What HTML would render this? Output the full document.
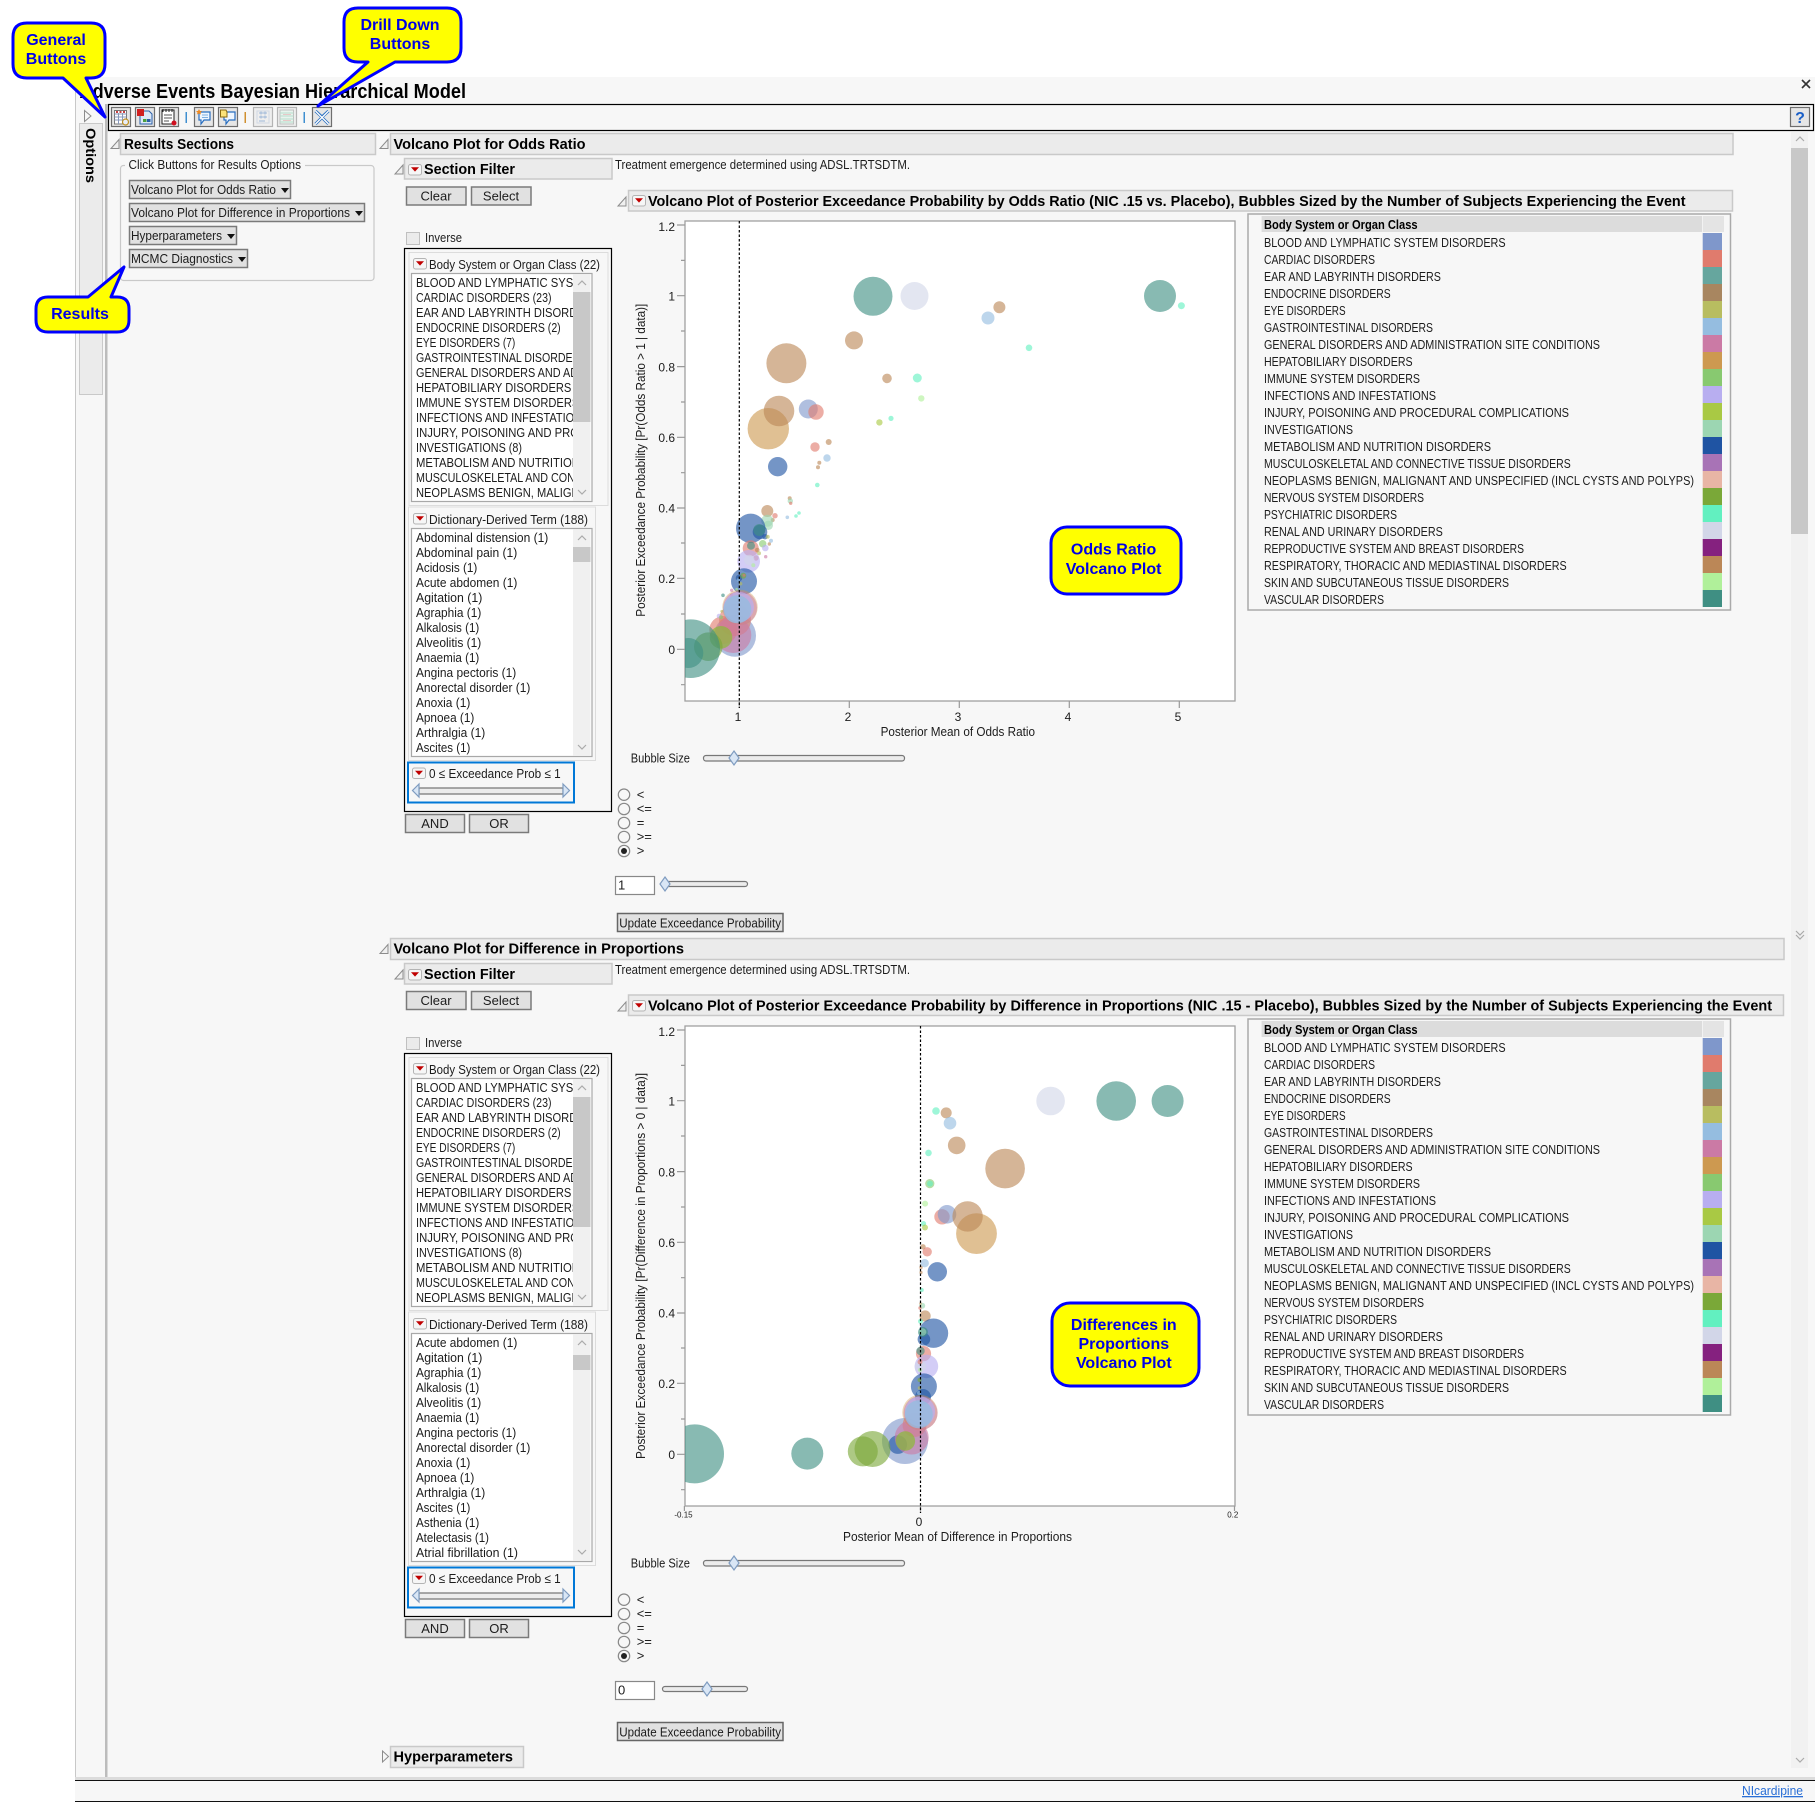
<!DOCTYPE html>
<html><head><meta charset="utf-8"><title>Adverse Events Bayesian Hierarchical Model</title>
<style>
html,body{margin:0;padding:0;background:#fff}
svg{display:block}
text{font-family:"Liberation Sans",sans-serif;font-size:13px;fill:#1c1c1c}
.b{font-weight:bold;font-size:15px;fill:#000}
.s{font-size:12px}
.h{fill:#ebebeb;stroke:#c9c9c9;stroke-width:1.5}
.btn{fill:#e1e1e1;stroke:#7a7a7a;stroke-width:1.5}
.cl{fill:#ff0;stroke:#00f;stroke-width:3;stroke-linejoin:round}
.ct{font-weight:bold;font-size:16px;fill:#0000e6;text-anchor:middle}
.tk{stroke:#999;stroke-width:1.2}
.c{text-anchor:middle}
.e{text-anchor:end}
.bub circle{fill-opacity:.62}
.bl{fill:#7f97cb}.ca{fill:#e07b6d}.ea{fill:#3f8f83}.en{fill:#a88660}.ey{fill:#b8bd60}.ga{fill:#95bde0}.ge{fill:#cb7aa5}.hp{fill:#cd9950}.im{fill:#88c970}.inf{fill:#b8aef0}.ij{fill:#a9c944}.iv{fill:#9cd6b2}.me{fill:#1f54a3}.mu{fill:#a873b6}.ne{fill:#7aa838}.ps{fill:#62f0c0}.re{fill:#d2d6e8}.rs{fill:#bb8757}.sk{fill:#b0f09a}
</style></head>
<body>
<svg xmlns="http://www.w3.org/2000/svg" width="1815" height="1820" viewBox="0 0 1815 1820">
<defs>
<g id="tri"><path d="M0 9L8 9L8 0Z" fill="#f0f0f0" stroke="#8c8c8c"/></g>
<g id="red"><rect x=".5" y=".5" width="13" height="10.5" rx="2" fill="#f6f6f6" stroke="#b4b4b4"/><path d="M3 3.2L11 3.2L7 7.6Z" fill="#c00000"/></g>
<g id="up"><path d="M-4 2L0 -2L4 2" fill="none" stroke="#aaa" stroke-width="1.2"/></g>
<g id="dn"><path d="M-4 -2L0 2L4 -2" fill="none" stroke="#aaa" stroke-width="1.2"/></g>
<g id="dia"><path d="M0 -7L5 0L0 7L-5 0Z" fill="#d9e6f5" stroke="#7f9cc0" stroke-width="1.2"/></g>
<g id="rad"><circle r="5.7" fill="#f7f7f7" stroke="#888" stroke-width="1.2"/></g>
<clipPath id="cl1"><rect x="412" y="274" width="161" height="227"/></clipPath>
<clipPath id="cp"><rect x="685" y="221" width="550" height="480"/></clipPath>
<clipPath id="cp2"><rect x="685" y="1026" width="550" height="480"/></clipPath>
</defs>

<rect x="75" y="77" width="1740" height="1724" fill="#f7f7f7"/>
<rect x="75" y="1777" width="1740" height="3" fill="#dcdcdc"/>
<rect x="75" y="1780" width="1740" height="1" fill="#111"/>
<rect x="75" y="1801" width="1740" height="1" fill="#111"/>
<rect x="75" y="77" width="1" height="1700" fill="#c8c8c8"/>
<rect x="105" y="104" width="2.5" height="1673" fill="#bcbcbc"/>
<rect x="79.500" y="123.500" width="23" height="271" fill="#ebebeb" stroke="#c9c9c9"/>
<path d="M84.500 110.500L91 116L84.500 121.500Z" fill="#f7f7f7" stroke="#8c8c8c"/>
<text transform="translate(86,128) rotate(90)" class="b" style="font-size:14px" textLength="55" lengthAdjust="spacingAndGlyphs">Options</text>

<text x="79.500" y="98" class="b" style="font-size:20px" textLength="386.500" lengthAdjust="spacingAndGlyphs">Adverse Events Bayesian Hierarchical Model</text>
<path d="M1802 80L1810 88M1810 80L1802 88" stroke="#333" stroke-width="1.6"/>

<!-- toolbar -->
<rect x="108.500" y="104.500" width="1705" height="26" fill="#f7f7f7" stroke="#000" stroke-width="1.2"/>
<g fill="#e6e6e6" stroke="#6e6e6e" stroke-width="1.2">
<rect x="111.500" y="107.500" width="19" height="19"/><rect x="135.500" y="107.500" width="19" height="19"/><rect x="159.500" y="107.500" width="19" height="19"/><rect x="194.500" y="107.500" width="19" height="19"/><rect x="218.500" y="107.500" width="19" height="19"/>
<rect x="312.500" y="107.500" width="19" height="19"/>
</g>
<g fill="#eee" stroke="#b4b4b4" stroke-width="1.2"><rect x="253.500" y="107.500" width="19" height="19"/><rect x="277.500" y="107.500" width="19" height="19"/></g>
<rect x="185.500" y="112" width="1.500" height="11" fill="#3f8fd0"/><rect x="244.500" y="112" width="1.500" height="11" fill="#d09030"/><rect x="303.500" y="112" width="1.500" height="11" fill="#3f8fd0"/>
<!-- icon 1 -->
<rect x="114.500" y="110.500" width="12" height="13.500" fill="#fff" stroke="#777"/><path d="M116 112H118M119.500 112H121.500M123 112H125" stroke="#c94040" stroke-width="2"/><path d="M114.500 114H126.500M114.500 117H126.500M114.500 120H126.500M118.500 113V124M122.500 113V124" stroke="#8899bb" fill="none"/><circle cx="125.500" cy="122" r="3" fill="#e8eef8" stroke="#c09020" stroke-width="1.200"/>
<!-- icon 2 -->
<path d="M140 111H149L152 114V124H140Z" fill="#dce8f8" stroke="#2a5fa8"/><rect x="137" y="109" width="7" height="7" fill="#d02020"/><rect x="143" y="119" width="3.500" height="3" fill="#4aa040"/><rect x="147" y="119" width="3.500" height="3" fill="#2a5fa8"/>
<!-- icon 3 -->
<rect x="162" y="110" width="12" height="14" fill="#fff" stroke="#222"/><path d="M163 109V112M166 109V112M169 109V112M172 109V112" stroke="#222"/><path d="M164 115H172M164 118H172M164 121H169" stroke="#555"/><circle cx="174" cy="123" r="2.500" fill="#d01020"/>
<!-- icon 4 -->
<path d="M199 112H210V120H204L201 124V120H199Z" fill="#eef6ff" stroke="#2a6fc0" stroke-width="1.200"/><path d="M202 115H208M202 117.500H208" stroke="#7fb0e0"/><path d="M199 109L200 111L202 111L200.500 112.500L201 114.500L199 113.500L197 114.500L197.500 112.500L196 111L198 111Z" fill="#f08a20"/>
<!-- icon 5 -->
<path d="M224 112H235V120H229L226 124V120H224Z" fill="#eef6ff" stroke="#2a6fc0" stroke-width="1.200"/><path d="M220.500 110H226L227 112V117H220.500Z" fill="#fbe37a" stroke="#8a6a10"/>
<!-- icon 6 -->
<g stroke="#9fb8d8" fill="none"><path d="M257 111H269V123H257Z" stroke="#d0d8e4"/><path d="M259 113H267M259 117H267M259 121H265M261 111.500V114.500M265 111.500V114.500M261 115.500V118.500M265 115.500V118.500"/></g>
<!-- icon 7 -->
<rect x="280" y="110" width="13.500" height="14" fill="#e8f4ee" stroke="#c0c0c0"/><path d="M280 113H293.500M280 116H293.500M280 119H293.500M280 122H293.500" stroke="#b8dccc"/><path d="M283 114.500H291M283 120.500H291" stroke="#e8c8c8"/>
<!-- icon 8 -->
<path d="M315.500 111L322 117L328.500 111M315.500 124L322 117.500L328.500 124" fill="none" stroke="#2a6fc0" stroke-width="3"/><path d="M315.500 111L328.500 124M328.500 111L315.500 124" stroke="#fff" stroke-width="1.300"/>
<!-- help -->
<rect x="1790.500" y="107.500" width="19" height="19" fill="#e6e6e6" stroke="#6e6e6e" stroke-width="1.200"/>
<text x="1800" y="123" class="c" style="font-size:16px;font-weight:bold;fill:#1a5fc8">?</text>

<!-- main scrollbar -->
<rect x="1791" y="132" width="17" height="1636" fill="#f1f1f1"/>
<rect x="1791" y="148" width="17" height="386" fill="#c8c8c8"/>
<use href="#up" x="1800" y="139"/><use href="#dn" x="1800" y="1760"/>
<use href="#dn" x="1800" y="933"/><use href="#dn" x="1800" y="937"/>

<!-- Results sections -->
<use href="#tri" x="111" y="139.500"/>
<rect x="120.500" y="133.500" width="255" height="21" class="h"/>
<text x="124" y="149" class="b" textLength="110" lengthAdjust="spacingAndGlyphs">Results Sections</text>
<rect x="120.500" y="165.500" width="253.500" height="115" rx="3" fill="none" stroke="#c9c9c9" stroke-width="1.2"/>
<rect x="125" y="160" width="180" height="12" fill="#f7f7f7"/>
<text x="128.500" y="169" textLength="172.500" lengthAdjust="spacingAndGlyphs">Click Buttons for Results Options</text>
<rect x="129.500" y="180.500" width="161" height="18" class="btn"/>
<text x="131" y="194" textLength="145" lengthAdjust="spacingAndGlyphs">Volcano Plot for Odds Ratio</text><path d="M281 188H289L285 193Z" fill="#111"/>
<rect x="129.500" y="203.500" width="235" height="18" class="btn"/>
<text x="131" y="217" textLength="219" lengthAdjust="spacingAndGlyphs">Volcano Plot for Difference in Proportions</text><path d="M355 211H363L359 216Z" fill="#111"/>
<rect x="129.500" y="226.500" width="107" height="18" class="btn"/>
<text x="131" y="240" textLength="91" lengthAdjust="spacingAndGlyphs">Hyperparameters</text><path d="M227 234H235L231 239Z" fill="#111"/>
<rect x="129.500" y="249.500" width="118" height="18" class="btn"/>
<text x="131" y="263" textLength="102" lengthAdjust="spacingAndGlyphs">MCMC Diagnostics</text><path d="M238 257H246L242 262Z" fill="#111"/>

<!-- ========== SECTION 1 ========== -->
<g>
<use href="#tri" x="380" y="139.500"/>
<rect x="390.500" y="133.500" width="1342.500" height="21" class="h"/>
<text x="393.500" y="149" class="b" textLength="192" lengthAdjust="spacingAndGlyphs">Volcano Plot for Odds Ratio</text>
<use href="#tri" x="395" y="165"/>
<rect x="404.500" y="158.500" width="207.500" height="20.500" class="h"/>
<use href="#red" x="408" y="164"/>
<text x="424" y="174" class="b" textLength="91" lengthAdjust="spacingAndGlyphs">Section Filter</text>
<text x="615" y="169" textLength="295" lengthAdjust="spacingAndGlyphs">Treatment emergence determined using ADSL.TRTSDTM.</text>
<rect x="406.500" y="187" width="59.500" height="18" class="btn"/><text x="436" y="200.500" class="c">Clear</text>
<rect x="471.500" y="187" width="59.500" height="18" class="btn"/><text x="501" y="200.500" class="c">Select</text>
<rect x="406.500" y="232.500" width="13" height="12" fill="#ebebeb" stroke="#c0c0c0"/>
<text x="425" y="242" textLength="37" lengthAdjust="spacingAndGlyphs">Inverse</text>
<rect x="404.500" y="248.500" width="207" height="563" fill="#f7f7f7" stroke="#000" stroke-width="1.200"/>
<rect x="409" y="252.500" width="199" height="253" fill="none" stroke="#dcdcdc"/>
<use href="#red" x="413" y="258"/>
<text x="429" y="269" textLength="171" lengthAdjust="spacingAndGlyphs">Body System or Organ Class (22)</text>
<rect x="411.500" y="273.500" width="180.500" height="228" fill="#fff" stroke="#a8a8a8" stroke-width="1.200"/>
<rect x="573" y="274.500" width="17.500" height="226" fill="#f0f0f0"/><rect x="573" y="292" width="17.500" height="130" fill="#c8c8c8"/>
<use href="#up" x="582" y="283"/><use href="#dn" x="582" y="492"/>
<g clip-path="url(#cl1)">
<text x="416" y="287" textLength="268" lengthAdjust="spacingAndGlyphs">BLOOD AND LYMPHATIC SYSTEM DISORDERS (4)</text>
<text x="416" y="302" textLength="135.500" lengthAdjust="spacingAndGlyphs">CARDIAC DISORDERS (23)</text>
<text x="416" y="317" textLength="201" lengthAdjust="spacingAndGlyphs">EAR AND LABYRINTH DISORDERS (5)</text>
<text x="416" y="332" textLength="144.700" lengthAdjust="spacingAndGlyphs">ENDOCRINE DISORDERS (2)</text>
<text x="416" y="347" textLength="99.300" lengthAdjust="spacingAndGlyphs">EYE DISORDERS (7)</text>
<text x="416" y="362" textLength="193" lengthAdjust="spacingAndGlyphs">GASTROINTESTINAL DISORDERS (20)</text>
<text x="416" y="377" textLength="360" lengthAdjust="spacingAndGlyphs">GENERAL DISORDERS AND ADMINISTRATION SITE CONDITIONS (15)</text>
<text x="416" y="392" textLength="172" lengthAdjust="spacingAndGlyphs">HEPATOBILIARY DISORDERS (3)</text>
<text x="416" y="407" textLength="180" lengthAdjust="spacingAndGlyphs">IMMUNE SYSTEM DISORDERS (2)</text>
<text x="416" y="422" textLength="196" lengthAdjust="spacingAndGlyphs">INFECTIONS AND INFESTATIONS (20)</text>
<text x="416" y="437" textLength="329" lengthAdjust="spacingAndGlyphs">INJURY, POISONING AND PROCEDURAL COMPLICATIONS (9)</text>
<text x="416" y="452" textLength="106" lengthAdjust="spacingAndGlyphs">INVESTIGATIONS (8)</text>
<text x="416" y="467" textLength="251" lengthAdjust="spacingAndGlyphs">METABOLISM AND NUTRITION DISORDERS (9)</text>
<text x="416" y="482" textLength="330" lengthAdjust="spacingAndGlyphs">MUSCULOSKELETAL AND CONNECTIVE TISSUE DISORDERS (8)</text>
<text x="416" y="497" textLength="454" lengthAdjust="spacingAndGlyphs">NEOPLASMS BENIGN, MALIGNANT AND UNSPECIFIED (INCL CYSTS AND POLYPS) (4)</text>
</g>
<rect x="408.500" y="507" width="187" height="253.500" fill="none" stroke="#dcdcdc"/>
<use href="#red" x="413" y="513"/>
<text x="429" y="524" textLength="159" lengthAdjust="spacingAndGlyphs">Dictionary-Derived Term (188)</text>
<rect x="411.500" y="528.500" width="180.500" height="228" fill="#fff" stroke="#a8a8a8" stroke-width="1.200"/>
<rect x="573" y="529.500" width="17.500" height="226" fill="#f0f0f0"/><rect x="573" y="547" width="17.500" height="15" fill="#c8c8c8"/>
<use href="#up" x="582" y="538"/><use href="#dn" x="582" y="747"/>
<text x="416" y="542" textLength="132.300" lengthAdjust="spacingAndGlyphs">Abdominal distension (1)</text>
<text x="416" y="557" textLength="101.300" lengthAdjust="spacingAndGlyphs">Abdominal pain (1)</text>
<text x="416" y="572" textLength="61.300" lengthAdjust="spacingAndGlyphs">Acidosis (1)</text>
<text x="416" y="587" textLength="101.300" lengthAdjust="spacingAndGlyphs">Acute abdomen (1)</text>
<text x="416" y="602" textLength="66.300" lengthAdjust="spacingAndGlyphs">Agitation (1)</text>
<text x="416" y="617" textLength="65.300" lengthAdjust="spacingAndGlyphs">Agraphia (1)</text>
<text x="416" y="632" textLength="63.300" lengthAdjust="spacingAndGlyphs">Alkalosis (1)</text>
<text x="416" y="647" textLength="65.300" lengthAdjust="spacingAndGlyphs">Alveolitis (1)</text>
<text x="416" y="662" textLength="63.300" lengthAdjust="spacingAndGlyphs">Anaemia (1)</text>
<text x="416" y="677" textLength="100.300" lengthAdjust="spacingAndGlyphs">Angina pectoris (1)</text>
<text x="416" y="692" textLength="114.300" lengthAdjust="spacingAndGlyphs">Anorectal disorder (1)</text>
<text x="416" y="707" textLength="54.300" lengthAdjust="spacingAndGlyphs">Anoxia (1)</text>
<text x="416" y="722" textLength="58.300" lengthAdjust="spacingAndGlyphs">Apnoea (1)</text>
<text x="416" y="737" textLength="69.300" lengthAdjust="spacingAndGlyphs">Arthralgia (1)</text>
<text x="416" y="752" textLength="54.300" lengthAdjust="spacingAndGlyphs">Ascites (1)</text>
<rect x="408" y="762.500" width="166" height="40" fill="#f7f7f7" stroke="#0078d7" stroke-width="2"/>
<use href="#red" x="412" y="767.500"/>
<text x="429" y="778" textLength="131.700" lengthAdjust="spacingAndGlyphs">0 ≤ Exceedance Prob ≤ 1</text>
<rect x="419" y="788" width="144" height="6" rx="1" fill="#ececec" stroke="#777" stroke-width="1.200"/>
<path d="M419 784L412.500 790.500L419 797Z" fill="#d9e6f5" stroke="#7f9cc0" stroke-width="1.200"/><path d="M563 784L569.500 790.500L563 797Z" fill="#d9e6f5" stroke="#7f9cc0" stroke-width="1.200"/>
<rect x="405.500" y="814.500" width="59" height="18" class="btn"/><text x="435" y="828" class="c">AND</text>
<rect x="469.500" y="814.500" width="59" height="18" class="btn"/><text x="499" y="828" class="c">OR</text>

<use href="#tri" x="618" y="197"/>
<rect x="628.500" y="190.500" width="1104" height="20.500" class="h"/>
<use href="#red" x="632" y="195"/>
<text x="648" y="206" class="b" textLength="1037.500" lengthAdjust="spacingAndGlyphs">Volcano Plot of Posterior Exceedance Probability by Odds Ratio (NIC .15 vs. Placebo), Bubbles Sized by the Number of Subjects Experiencing the Event</text>

<rect x="685" y="221" width="550" height="480" fill="#fff" stroke="#a0a0a0" stroke-width="1.300"/>
<g class="bub" clip-path="url(#cp)">
<circle cx="873" cy="296.300" r="19.500" class="ea"/><circle cx="914.500" cy="296" r="14" class="re"/><circle cx="1160" cy="296" r="16" class="ea"/><circle cx="1181.400" cy="305.700" r="3.500" class="ps"/><circle cx="999.400" cy="307.300" r="6" class="rs"/><circle cx="988" cy="318" r="6.500" class="ga"/><circle cx="1029" cy="347.800" r="3.300" class="ps"/><circle cx="854" cy="340.400" r="9" class="rs"/><circle cx="786.400" cy="363.300" r="20" class="rs"/><circle cx="887" cy="378.400" r="4.800" class="rs"/><circle cx="917.300" cy="378" r="4.500" class="ps"/><circle cx="921.300" cy="398.400" r="3.200" class="sk"/><circle cx="879.400" cy="422.400" r="3.200" class="ij"/><circle cx="891" cy="418.400" r="2.600" class="ps"/>
<circle cx="768.300" cy="428.700" r="20.700" class="hp"/><circle cx="779" cy="411" r="15.300" class="rs"/><circle cx="808.300" cy="409" r="9.500" class="bl"/><circle cx="816" cy="412" r="7.700" class="ca"/><circle cx="815" cy="447" r="4.700" class="ca"/><circle cx="828.700" cy="442" r="3" class="rs"/><circle cx="827" cy="458" r="3.700" class="ga"/><circle cx="819.300" cy="462.700" r="2" class="rs"/><circle cx="818" cy="467.300" r="2" class="rs"/><circle cx="777.700" cy="466.700" r="9.700" class="me"/><circle cx="817.300" cy="485" r="2.300" class="ps"/>
<circle cx="789.700" cy="498.300" r="2" class="rs"/><circle cx="790.300" cy="501" r="2.700" class="iv"/><circle cx="790.700" cy="503.300" r="1.700" class="ca"/><circle cx="787.300" cy="517.300" r="1.800" class="ga"/><circle cx="796" cy="516" r="1.800" class="ps"/><circle cx="799" cy="513" r="1.800" class="ps"/>
<circle cx="767.300" cy="511" r="6" class="rs"/><circle cx="775" cy="515.700" r="2.700" class="ca"/><circle cx="772.700" cy="520" r="2" class="rs"/><circle cx="767.300" cy="520.700" r="6" class="iv"/><circle cx="768.300" cy="525.300" r="4.700" class="iv"/>
<circle cx="750.700" cy="528.300" r="14.700" class="me"/><circle cx="760" cy="532" r="7.300" class="me"/><circle cx="759.300" cy="530" r="6" class="ea"/><circle cx="765" cy="536.700" r="2.700" class="me"/><circle cx="767.700" cy="536.700" r="2" class="ey"/><circle cx="771" cy="540.700" r="2" class="ga"/><circle cx="762.700" cy="543.700" r="3.700" class="im"/><circle cx="769.300" cy="544" r="1.700" class="rs"/>
<circle cx="750.700" cy="548.300" r="8" class="ca"/><circle cx="751" cy="545.700" r="4" class="ea"/><circle cx="765.300" cy="548" r="3.300" class="inf"/><circle cx="757.300" cy="550" r="2.300" class="rs"/><circle cx="759" cy="553.300" r="2" class="ey"/><circle cx="765.700" cy="556.700" r="1.700" class="ge"/><circle cx="756" cy="558" r="2.700" class="ca"/>
<circle cx="748.700" cy="561.300" r="11.300" class="inf"/><circle cx="749.300" cy="560" r="5.300" class="re"/><circle cx="753.300" cy="565.300" r="2" class="sk"/>
<circle cx="744" cy="581.300" r="13" class="me"/><circle cx="739" cy="578" r="3.300" class="me"/><circle cx="743.300" cy="575.700" r="3" class="ne"/><circle cx="744" cy="575.300" r="1.400" class="ca"/><circle cx="740.700" cy="583.700" r="1.700" class="ey"/><circle cx="738.300" cy="580" r="1.700" class="ga"/><circle cx="731.700" cy="590.300" r="1.700" class="ge"/><circle cx="723" cy="595.300" r="1.800" class="ea"/><circle cx="731.700" cy="595.300" r="1.700" class="ca"/><circle cx="736.700" cy="589.300" r="1.400" class="sk"/>
<circle cx="735" cy="635.700" r="21" class="bl"/><circle cx="723.300" cy="630" r="14" class="ca"/><circle cx="735" cy="620" r="16" class="ca"/><circle cx="733.300" cy="635" r="18" class="ge"/>
<circle cx="721" cy="637.300" r="11.300" fill="#8db83a" style="fill-opacity:.72"/><circle cx="708.300" cy="646.700" r="14.300" class="ne"/><circle cx="690.700" cy="648.700" r="29.300" class="ea"/><circle cx="688.300" cy="653" r="15" class="ea"/>
<circle cx="740" cy="607.300" r="17.700" class="hp" style="fill-opacity:.4"/><circle cx="740" cy="608" r="17" class="ge" style="fill-opacity:.5"/><circle cx="739" cy="607" r="15" class="inf" style="fill-opacity:.7"/><circle cx="737.300" cy="609.300" r="14" class="ga" style="fill-opacity:.8"/>
<circle cx="719" cy="616" r="2.300" class="inf"/><circle cx="721" cy="617.300" r="2" class="im"/><circle cx="721.700" cy="611.300" r="1.400" class="ey"/>
</g>
<g class="tk"><path d="M677 225H685M677 295.700H685M677 366.600H685M677 437.300H685M677 508H685M677 578.300H685M677 649.300H685M681 260.400H685M681 331H685M681 402H685M681 472.700H685M681 543H685M681 614H685M681 684.700H685M739.300 701V708M849.300 701V708M959.300 701V708M1069.300 701V708M1179.300 701V708"/></g>
<path d="M739.300 221V708" stroke="#000" stroke-width="1.200" stroke-dasharray="2.500 2" fill="none"/>
<text x="675" y="231" class="e s">1.2</text><text x="675" y="300.500" class="e s">1</text><text x="675" y="371.500" class="e s">0.8</text><text x="675" y="442" class="e s">0.6</text><text x="675" y="512.500" class="e s">0.4</text><text x="675" y="583" class="e s">0.2</text><text x="675" y="654" class="e s">0</text>
<text x="738" y="721" class="c s">1</text><text x="848" y="721" class="c s">2</text><text x="958" y="721" class="c s">3</text><text x="1068" y="721" class="c s">4</text><text x="1178" y="721" class="c s">5</text>
<text x="880.600" y="736" textLength="154.400" lengthAdjust="spacingAndGlyphs">Posterior Mean of Odds Ratio</text>
<text transform="translate(645,616.700) rotate(-90)" textLength="313" lengthAdjust="spacingAndGlyphs">Posterior Exceedance Probability [Pr(Odds Ratio &gt; 1 | data)]</text>

<rect x="1248" y="214" width="482.500" height="396" fill="#f7f7f7" stroke="#aaa" stroke-width="1.500"/>
<rect x="1261.600" y="216" width="440.400" height="16" fill="#dcdcdc"/><rect x="1702.700" y="216" width="21.300" height="16" fill="#e4e4e4"/>
<text x="1264" y="229" class="b" style="font-size:13px" textLength="153.600" lengthAdjust="spacingAndGlyphs">Body System or Organ Class</text>
<text x="1264" y="247" textLength="241.600" lengthAdjust="spacingAndGlyphs">BLOOD AND LYMPHATIC SYSTEM DISORDERS</text>
<text x="1264" y="264" textLength="111" lengthAdjust="spacingAndGlyphs">CARDIAC DISORDERS</text>
<text x="1264" y="281" textLength="176.900" lengthAdjust="spacingAndGlyphs">EAR AND LABYRINTH DISORDERS</text>
<text x="1264" y="298" textLength="126.700" lengthAdjust="spacingAndGlyphs">ENDOCRINE DISORDERS</text>
<text x="1264" y="315" textLength="81.600" lengthAdjust="spacingAndGlyphs">EYE DISORDERS</text>
<text x="1264" y="332" textLength="169" lengthAdjust="spacingAndGlyphs">GASTROINTESTINAL DISORDERS</text>
<text x="1264" y="349" textLength="336" lengthAdjust="spacingAndGlyphs">GENERAL DISORDERS AND ADMINISTRATION SITE CONDITIONS</text>
<text x="1264" y="366" textLength="148.600" lengthAdjust="spacingAndGlyphs">HEPATOBILIARY DISORDERS</text>
<text x="1264" y="383" textLength="156" lengthAdjust="spacingAndGlyphs">IMMUNE SYSTEM DISORDERS</text>
<text x="1264" y="400" textLength="172" lengthAdjust="spacingAndGlyphs">INFECTIONS AND INFESTATIONS</text>
<text x="1264" y="417" textLength="305" lengthAdjust="spacingAndGlyphs">INJURY, POISONING AND PROCEDURAL COMPLICATIONS</text>
<text x="1264" y="434" textLength="89" lengthAdjust="spacingAndGlyphs">INVESTIGATIONS</text>
<text x="1264" y="451" textLength="227" lengthAdjust="spacingAndGlyphs">METABOLISM AND NUTRITION DISORDERS</text>
<text x="1264" y="468" textLength="306.700" lengthAdjust="spacingAndGlyphs">MUSCULOSKELETAL AND CONNECTIVE TISSUE DISORDERS</text>
<text x="1264" y="485" textLength="430" lengthAdjust="spacingAndGlyphs">NEOPLASMS BENIGN, MALIGNANT AND UNSPECIFIED (INCL CYSTS AND POLYPS)</text>
<text x="1264" y="502" textLength="160" lengthAdjust="spacingAndGlyphs">NERVOUS SYSTEM DISORDERS</text>
<text x="1264" y="519" textLength="133" lengthAdjust="spacingAndGlyphs">PSYCHIATRIC DISORDERS</text>
<text x="1264" y="536" textLength="178.800" lengthAdjust="spacingAndGlyphs">RENAL AND URINARY DISORDERS</text>
<text x="1264" y="553" textLength="260" lengthAdjust="spacingAndGlyphs">REPRODUCTIVE SYSTEM AND BREAST DISORDERS</text>
<text x="1264" y="570" textLength="302.700" lengthAdjust="spacingAndGlyphs">RESPIRATORY, THORACIC AND MEDIASTINAL DISORDERS</text>
<text x="1264" y="587" textLength="245" lengthAdjust="spacingAndGlyphs">SKIN AND SUBCUTANEOUS TISSUE DISORDERS</text>
<text x="1264" y="604" textLength="120" lengthAdjust="spacingAndGlyphs">VASCULAR DISORDERS</text>
<g id="sw">
<rect x="1702.700" y="233" width="19.300" height="17" fill="#7f97cb"/><rect x="1702.700" y="250" width="19.300" height="17" fill="#e07b6d"/><rect x="1702.700" y="267" width="19.300" height="17" fill="#66a69e"/><rect x="1702.700" y="284" width="19.300" height="17" fill="#a88660"/><rect x="1702.700" y="301" width="19.300" height="17" fill="#b8bd60"/><rect x="1702.700" y="318" width="19.300" height="17" fill="#95bde0"/><rect x="1702.700" y="335" width="19.300" height="17" fill="#cb7aa5"/><rect x="1702.700" y="352" width="19.300" height="17" fill="#cd9950"/><rect x="1702.700" y="369" width="19.300" height="17" fill="#88c970"/><rect x="1702.700" y="386" width="19.300" height="17" fill="#b8aef0"/><rect x="1702.700" y="403" width="19.300" height="17" fill="#a9c944"/><rect x="1702.700" y="420" width="19.300" height="17" fill="#9cd6b2"/><rect x="1702.700" y="437" width="19.300" height="17" fill="#1f54a3"/><rect x="1702.700" y="454" width="19.300" height="17" fill="#a873b6"/><rect x="1702.700" y="471" width="19.300" height="17" fill="#e8b5a5"/><rect x="1702.700" y="488" width="19.300" height="17" fill="#7aa838"/><rect x="1702.700" y="505" width="19.300" height="17" fill="#62f0c0"/><rect x="1702.700" y="522" width="19.300" height="17" fill="#d2d6e8"/><rect x="1702.700" y="539" width="19.300" height="17" fill="#85217f"/><rect x="1702.700" y="556" width="19.300" height="17" fill="#bb8757"/><rect x="1702.700" y="573" width="19.300" height="17" fill="#b0f09a"/><rect x="1702.700" y="590" width="19.300" height="17" fill="#3f8f83"/>
</g>

<text x="630.700" y="762.700" textLength="59.300" lengthAdjust="spacingAndGlyphs">Bubble Size</text>
<rect x="703.500" y="755.500" width="201" height="5.500" rx="2.500" fill="#ececec" stroke="#777" stroke-width="1.200"/>
<use href="#dia" x="734" y="758"/>
<use href="#rad" x="624" y="794.700"/><use href="#rad" x="624" y="809"/><use href="#rad" x="624" y="823"/><use href="#rad" x="624" y="837"/><use href="#rad" x="624" y="851"/><circle cx="624" cy="851" r="3" fill="#222"/>
<text x="636.700" y="799">&lt;</text><text x="636.700" y="813">&lt;=</text><text x="636.700" y="827">=</text><text x="636.700" y="841">&gt;=</text><text x="636.700" y="855">&gt;</text>
<rect x="615.500" y="876.500" width="39" height="18" fill="#fff" stroke="#888" stroke-width="1.200"/>
<text x="618" y="889.500">1</text>
<rect x="662" y="881.500" width="85.500" height="5" rx="2.500" fill="#ececec" stroke="#777" stroke-width="1.200"/>
<use href="#dia" x="665" y="884"/>
<rect x="617.500" y="913.500" width="165.500" height="18" fill="#e1e1e1" stroke="#666" stroke-width="1.500"/>
<text x="619.300" y="927.700" textLength="161.700" lengthAdjust="spacingAndGlyphs">Update Exceedance Probability</text>
</g>

<!-- ========== SECTION 2 ========== -->
<g transform="translate(0,805)">
<use href="#tri" x="380" y="139.500"/>
<rect x="390.500" y="133.500" width="1393.500" height="21" class="h"/>
<text x="393.500" y="148.500" class="b" textLength="290.500" lengthAdjust="spacingAndGlyphs">Volcano Plot for Difference in Proportions</text>
<use href="#tri" x="395" y="165"/>
<rect x="404.500" y="158.500" width="207.500" height="20.500" class="h"/>
<use href="#red" x="408" y="164"/>
<text x="424" y="174" class="b" textLength="91" lengthAdjust="spacingAndGlyphs">Section Filter</text>
<text x="615" y="169" textLength="295" lengthAdjust="spacingAndGlyphs">Treatment emergence determined using ADSL.TRTSDTM.</text>
<rect x="406.500" y="186.500" width="59.500" height="18" class="btn"/><text x="436" y="200" class="c">Clear</text>
<rect x="471.500" y="186.500" width="59.500" height="18" class="btn"/><text x="501" y="200" class="c">Select</text>
<rect x="406.500" y="232.500" width="13" height="12" fill="#ebebeb" stroke="#c0c0c0"/>
<text x="425" y="242" textLength="37" lengthAdjust="spacingAndGlyphs">Inverse</text>
<rect x="404.500" y="248.500" width="207" height="563" fill="#f7f7f7" stroke="#000" stroke-width="1.200"/>
<rect x="409" y="252.500" width="199" height="253" fill="none" stroke="#dcdcdc"/>
<use href="#red" x="413" y="258"/>
<text x="429" y="269" textLength="171" lengthAdjust="spacingAndGlyphs">Body System or Organ Class (22)</text>
<rect x="411.500" y="273.500" width="180.500" height="228" fill="#fff" stroke="#a8a8a8" stroke-width="1.200"/>
<rect x="573" y="274.500" width="17.500" height="226" fill="#f0f0f0"/><rect x="573" y="292" width="17.500" height="130" fill="#c8c8c8"/>
<use href="#up" x="582" y="283"/><use href="#dn" x="582" y="492"/>
<g clip-path="url(#cl1)">
<text x="416" y="287" textLength="268" lengthAdjust="spacingAndGlyphs">BLOOD AND LYMPHATIC SYSTEM DISORDERS (4)</text>
<text x="416" y="302" textLength="135.500" lengthAdjust="spacingAndGlyphs">CARDIAC DISORDERS (23)</text>
<text x="416" y="317" textLength="201" lengthAdjust="spacingAndGlyphs">EAR AND LABYRINTH DISORDERS (5)</text>
<text x="416" y="332" textLength="144.700" lengthAdjust="spacingAndGlyphs">ENDOCRINE DISORDERS (2)</text>
<text x="416" y="347" textLength="99.300" lengthAdjust="spacingAndGlyphs">EYE DISORDERS (7)</text>
<text x="416" y="362" textLength="193" lengthAdjust="spacingAndGlyphs">GASTROINTESTINAL DISORDERS (20)</text>
<text x="416" y="377" textLength="360" lengthAdjust="spacingAndGlyphs">GENERAL DISORDERS AND ADMINISTRATION SITE CONDITIONS (15)</text>
<text x="416" y="392" textLength="172" lengthAdjust="spacingAndGlyphs">HEPATOBILIARY DISORDERS (3)</text>
<text x="416" y="407" textLength="180" lengthAdjust="spacingAndGlyphs">IMMUNE SYSTEM DISORDERS (2)</text>
<text x="416" y="422" textLength="196" lengthAdjust="spacingAndGlyphs">INFECTIONS AND INFESTATIONS (20)</text>
<text x="416" y="437" textLength="329" lengthAdjust="spacingAndGlyphs">INJURY, POISONING AND PROCEDURAL COMPLICATIONS (9)</text>
<text x="416" y="452" textLength="106" lengthAdjust="spacingAndGlyphs">INVESTIGATIONS (8)</text>
<text x="416" y="467" textLength="251" lengthAdjust="spacingAndGlyphs">METABOLISM AND NUTRITION DISORDERS (9)</text>
<text x="416" y="482" textLength="330" lengthAdjust="spacingAndGlyphs">MUSCULOSKELETAL AND CONNECTIVE TISSUE DISORDERS (8)</text>
<text x="416" y="497" textLength="454" lengthAdjust="spacingAndGlyphs">NEOPLASMS BENIGN, MALIGNANT AND UNSPECIFIED (INCL CYSTS AND POLYPS) (4)</text>
</g>
<rect x="408.500" y="507" width="187" height="253.500" fill="none" stroke="#dcdcdc"/>
<use href="#red" x="413" y="513"/>
<text x="429" y="524" textLength="159" lengthAdjust="spacingAndGlyphs">Dictionary-Derived Term (188)</text>
<rect x="411.500" y="528.500" width="180.500" height="228" fill="#fff" stroke="#a8a8a8" stroke-width="1.200"/>
<rect x="573" y="529.500" width="17.500" height="226" fill="#f0f0f0"/><rect x="573" y="550" width="17.500" height="15" fill="#c8c8c8"/>
<use href="#up" x="582" y="538"/><use href="#dn" x="582" y="747"/>
<text x="416" y="542" textLength="101.300" lengthAdjust="spacingAndGlyphs">Acute abdomen (1)</text>
<text x="416" y="557" textLength="66.300" lengthAdjust="spacingAndGlyphs">Agitation (1)</text>
<text x="416" y="572" textLength="65.300" lengthAdjust="spacingAndGlyphs">Agraphia (1)</text>
<text x="416" y="587" textLength="63.300" lengthAdjust="spacingAndGlyphs">Alkalosis (1)</text>
<text x="416" y="602" textLength="65.300" lengthAdjust="spacingAndGlyphs">Alveolitis (1)</text>
<text x="416" y="617" textLength="63.300" lengthAdjust="spacingAndGlyphs">Anaemia (1)</text>
<text x="416" y="632" textLength="100.300" lengthAdjust="spacingAndGlyphs">Angina pectoris (1)</text>
<text x="416" y="647" textLength="114.300" lengthAdjust="spacingAndGlyphs">Anorectal disorder (1)</text>
<text x="416" y="662" textLength="54.300" lengthAdjust="spacingAndGlyphs">Anoxia (1)</text>
<text x="416" y="677" textLength="58.300" lengthAdjust="spacingAndGlyphs">Apnoea (1)</text>
<text x="416" y="692" textLength="69.300" lengthAdjust="spacingAndGlyphs">Arthralgia (1)</text>
<text x="416" y="707" textLength="54.300" lengthAdjust="spacingAndGlyphs">Ascites (1)</text>
<text x="416" y="722" textLength="63.300" lengthAdjust="spacingAndGlyphs">Asthenia (1)</text>
<text x="416" y="737" textLength="73" lengthAdjust="spacingAndGlyphs">Atelectasis (1)</text>
<text x="416" y="752" textLength="102" lengthAdjust="spacingAndGlyphs">Atrial fibrillation (1)</text>
<rect x="408" y="762.500" width="166" height="40" fill="#f7f7f7" stroke="#0078d7" stroke-width="2"/>
<use href="#red" x="412" y="767.500"/>
<text x="429" y="778" textLength="131.700" lengthAdjust="spacingAndGlyphs">0 ≤ Exceedance Prob ≤ 1</text>
<rect x="419" y="788" width="144" height="6" rx="1" fill="#ececec" stroke="#777" stroke-width="1.200"/>
<path d="M419 784L412.500 790.500L419 797Z" fill="#d9e6f5" stroke="#7f9cc0" stroke-width="1.200"/><path d="M563 784L569.500 790.500L563 797Z" fill="#d9e6f5" stroke="#7f9cc0" stroke-width="1.200"/>
<rect x="405.500" y="814.500" width="59" height="18" class="btn"/><text x="435" y="828" class="c">AND</text>
<rect x="469.500" y="814.500" width="59" height="18" class="btn"/><text x="499" y="828" class="c">OR</text>

<use href="#tri" x="618" y="197"/>
<rect x="628.500" y="190" width="1155" height="20.500" class="h"/>
<use href="#red" x="632" y="195"/>
<text x="648" y="205.500" class="b" textLength="1124" lengthAdjust="spacingAndGlyphs">Volcano Plot of Posterior Exceedance Probability by Difference in Proportions (NIC .15 - Placebo), Bubbles Sized by the Number of Subjects Experiencing the Event</text>

<rect x="685" y="221" width="550" height="480" fill="#fff" stroke="#a0a0a0" stroke-width="1.300"/>
<g transform="translate(0,-805)"><g class="bub" clip-path="url(#cp2)">
<circle cx="1116.200" cy="1101" r="19.800" class="ea"/><circle cx="1167.600" cy="1101" r="16" class="ea"/><circle cx="1050.600" cy="1101" r="14.300" class="re"/><circle cx="936" cy="1111" r="3.800" class="ps"/><circle cx="946.200" cy="1112.900" r="5.500" class="rs"/><circle cx="950" cy="1123.200" r="6.300" class="ga"/><circle cx="956.700" cy="1145.400" r="8.800" class="rs"/><circle cx="928.500" cy="1152.900" r="3.300" class="ps"/><circle cx="1005.100" cy="1168.600" r="19.800" class="rs"/><circle cx="929.800" cy="1183.600" r="4.600" class="im"/><circle cx="930" cy="1183.600" r="3" class="ps"/><circle cx="925.100" cy="1203.600" r="3" class="sk"/>
<circle cx="942" cy="1216.800" r="7.700" class="ca"/><circle cx="947" cy="1214.300" r="9.300" class="bl"/><circle cx="976.500" cy="1233.600" r="20.400" class="hp"/><circle cx="967.600" cy="1216.400" r="15.200" class="rs"/><circle cx="923.500" cy="1223.600" r="2.600" class="ps"/><circle cx="925" cy="1227.500" r="3" class="ij"/><circle cx="923" cy="1246.800" r="2.700" class="rs"/><circle cx="927.200" cy="1251.800" r="4.700" class="ca"/><circle cx="924.700" cy="1263.200" r="4.200" class="ga"/><circle cx="937.300" cy="1271.800" r="9.700" class="me"/><circle cx="921" cy="1267.500" r="1.700" class="rs"/><circle cx="921" cy="1272.500" r="1.600" class="rs"/><circle cx="921.800" cy="1290" r="2" class="ps"/>
<circle cx="922.200" cy="1305.700" r="3" class="iv"/><circle cx="920.500" cy="1303.500" r="1.300" class="rs"/><circle cx="920" cy="1308" r="1.700" class="ca"/><circle cx="925.100" cy="1316" r="5.600" class="rs"/><circle cx="920.500" cy="1321.400" r="2.500" class="ps"/><circle cx="933.500" cy="1333.200" r="14.700" class="me"/><circle cx="923.900" cy="1339.300" r="6.300" class="me"/><circle cx="923" cy="1332" r="5" class="ea"/><circle cx="922.500" cy="1332" r="3.800" class="iv"/>
<circle cx="923.500" cy="1353.600" r="7.600" class="ca"/><circle cx="920.500" cy="1351" r="4.200" class="ea"/><circle cx="926.400" cy="1366.400" r="11.800" class="inf"/><circle cx="920.500" cy="1366.400" r="5.800" class="re"/><circle cx="920" cy="1362" r="2.500" class="ca"/><circle cx="920" cy="1370" r="2" class="sk"/>
<circle cx="923.900" cy="1386.400" r="13" class="me"/><circle cx="919.500" cy="1380" r="2" class="ne"/><circle cx="919.500" cy="1388" r="1.800" class="ey"/><circle cx="923" cy="1397" r="8" class="me"/><circle cx="919" cy="1393" r="2" class="ga"/><circle cx="919" cy="1400" r="1.700" class="ca"/>
<circle cx="905" cy="1441" r="23" class="bl"/><circle cx="897.800" cy="1444.600" r="9.300" class="me"/><circle cx="914.600" cy="1425" r="12" class="ca"/><circle cx="911.700" cy="1437.500" r="17" class="ge"/><circle cx="905.400" cy="1441" r="9.700" fill="#8db83a" style="fill-opacity:.72"/>
<circle cx="920" cy="1412.500" r="17.700" class="hp" style="fill-opacity:.4"/><circle cx="920.500" cy="1413" r="17" class="ge" style="fill-opacity:.5"/><circle cx="920" cy="1411.500" r="15" class="inf" style="fill-opacity:.7"/><circle cx="918.800" cy="1414.300" r="14" class="ga" style="fill-opacity:.8"/>
<circle cx="872.500" cy="1449" r="18" class="ne"/><circle cx="862.800" cy="1451.400" r="15" class="ne"/><circle cx="807.300" cy="1453.600" r="16" class="ea"/><circle cx="694.500" cy="1453.900" r="29.500" class="ea"/>
</g></g>
<g class="tk"><path d="M677 225H685M677 295.700H685M677 366.600H685M677 437.300H685M677 508H685M677 578.300H685M677 649.300H685M681 260.400H685M681 331H685M681 402H685M681 472.700H685M681 543H685M681 614H685M681 684.700H685M684.400 701V706M920.500 701V708M1234.500 701V706"/></g>
<path d="M920.500 221V708" stroke="#000" stroke-width="1.200" stroke-dasharray="2.500 2" fill="none"/>
<text x="675" y="231" class="e s">1.2</text><text x="675" y="300.500" class="e s">1</text><text x="675" y="371.500" class="e s">0.8</text><text x="675" y="442" class="e s">0.6</text><text x="675" y="512.500" class="e s">0.4</text><text x="675" y="583" class="e s">0.2</text><text x="675" y="654" class="e s">0</text>
<text x="683.500" y="712.500" class="c" style="font-size:8px">-0.15</text><text x="919" y="721" class="c s">0</text><text x="1232.800" y="712.500" class="c" style="font-size:8px">0.2</text>
<text x="843" y="736" textLength="229" lengthAdjust="spacingAndGlyphs">Posterior Mean of Difference in Proportions</text>
<text transform="translate(645,654) rotate(-90)" textLength="386" lengthAdjust="spacingAndGlyphs">Posterior Exceedance Probability [Pr(Difference in Proportions &gt; 0 | data)]</text>

<rect x="1248" y="214" width="482.500" height="396" fill="#f7f7f7" stroke="#aaa" stroke-width="1.500"/>
<rect x="1261.600" y="216" width="440.400" height="16" fill="#dcdcdc"/><rect x="1702.700" y="216" width="21.300" height="16" fill="#e4e4e4"/>
<text x="1264" y="229" class="b" style="font-size:13px" textLength="153.600" lengthAdjust="spacingAndGlyphs">Body System or Organ Class</text>
<text x="1264" y="247" textLength="241.600" lengthAdjust="spacingAndGlyphs">BLOOD AND LYMPHATIC SYSTEM DISORDERS</text>
<text x="1264" y="264" textLength="111" lengthAdjust="spacingAndGlyphs">CARDIAC DISORDERS</text>
<text x="1264" y="281" textLength="176.900" lengthAdjust="spacingAndGlyphs">EAR AND LABYRINTH DISORDERS</text>
<text x="1264" y="298" textLength="126.700" lengthAdjust="spacingAndGlyphs">ENDOCRINE DISORDERS</text>
<text x="1264" y="315" textLength="81.600" lengthAdjust="spacingAndGlyphs">EYE DISORDERS</text>
<text x="1264" y="332" textLength="169" lengthAdjust="spacingAndGlyphs">GASTROINTESTINAL DISORDERS</text>
<text x="1264" y="349" textLength="336" lengthAdjust="spacingAndGlyphs">GENERAL DISORDERS AND ADMINISTRATION SITE CONDITIONS</text>
<text x="1264" y="366" textLength="148.600" lengthAdjust="spacingAndGlyphs">HEPATOBILIARY DISORDERS</text>
<text x="1264" y="383" textLength="156" lengthAdjust="spacingAndGlyphs">IMMUNE SYSTEM DISORDERS</text>
<text x="1264" y="400" textLength="172" lengthAdjust="spacingAndGlyphs">INFECTIONS AND INFESTATIONS</text>
<text x="1264" y="417" textLength="305" lengthAdjust="spacingAndGlyphs">INJURY, POISONING AND PROCEDURAL COMPLICATIONS</text>
<text x="1264" y="434" textLength="89" lengthAdjust="spacingAndGlyphs">INVESTIGATIONS</text>
<text x="1264" y="451" textLength="227" lengthAdjust="spacingAndGlyphs">METABOLISM AND NUTRITION DISORDERS</text>
<text x="1264" y="468" textLength="306.700" lengthAdjust="spacingAndGlyphs">MUSCULOSKELETAL AND CONNECTIVE TISSUE DISORDERS</text>
<text x="1264" y="485" textLength="430" lengthAdjust="spacingAndGlyphs">NEOPLASMS BENIGN, MALIGNANT AND UNSPECIFIED (INCL CYSTS AND POLYPS)</text>
<text x="1264" y="502" textLength="160" lengthAdjust="spacingAndGlyphs">NERVOUS SYSTEM DISORDERS</text>
<text x="1264" y="519" textLength="133" lengthAdjust="spacingAndGlyphs">PSYCHIATRIC DISORDERS</text>
<text x="1264" y="536" textLength="178.800" lengthAdjust="spacingAndGlyphs">RENAL AND URINARY DISORDERS</text>
<text x="1264" y="553" textLength="260" lengthAdjust="spacingAndGlyphs">REPRODUCTIVE SYSTEM AND BREAST DISORDERS</text>
<text x="1264" y="570" textLength="302.700" lengthAdjust="spacingAndGlyphs">RESPIRATORY, THORACIC AND MEDIASTINAL DISORDERS</text>
<text x="1264" y="587" textLength="245" lengthAdjust="spacingAndGlyphs">SKIN AND SUBCUTANEOUS TISSUE DISORDERS</text>
<text x="1264" y="604" textLength="120" lengthAdjust="spacingAndGlyphs">VASCULAR DISORDERS</text>
<use href="#sw"/>

<text x="630.700" y="762.700" textLength="59.300" lengthAdjust="spacingAndGlyphs">Bubble Size</text>
<rect x="703.500" y="755.500" width="201" height="5.500" rx="2.500" fill="#ececec" stroke="#777" stroke-width="1.200"/>
<use href="#dia" x="734" y="758"/>
<use href="#rad" x="624" y="794.700"/><use href="#rad" x="624" y="809"/><use href="#rad" x="624" y="823"/><use href="#rad" x="624" y="837"/><use href="#rad" x="624" y="851"/><circle cx="624" cy="851" r="3" fill="#222"/>
<text x="636.700" y="799">&lt;</text><text x="636.700" y="813">&lt;=</text><text x="636.700" y="827">=</text><text x="636.700" y="841">&gt;=</text><text x="636.700" y="855">&gt;</text>
<rect x="615.500" y="876.500" width="39" height="18" fill="#fff" stroke="#888" stroke-width="1.200"/>
<text x="618" y="889.500">0</text>
<rect x="662.500" y="881.500" width="85" height="5" rx="2.500" fill="#ececec" stroke="#777" stroke-width="1.200"/>
<use href="#dia" x="707" y="884"/>
<rect x="617.500" y="917.500" width="165.500" height="18" fill="#e1e1e1" stroke="#666" stroke-width="1.500"/>
<text x="619.300" y="931.700" textLength="161.700" lengthAdjust="spacingAndGlyphs">Update Exceedance Probability</text>
</g>

<!-- Hyperparameters -->
<path d="M382.500 1751L388.500 1756.500L382.500 1762Z" fill="#f7f7f7" stroke="#8c8c8c"/>
<rect x="390.500" y="1746.500" width="133" height="21" class="h"/>
<text x="393.500" y="1761.700" class="b" textLength="119.500" lengthAdjust="spacingAndGlyphs">Hyperparameters</text>

<text x="1742" y="1795" textLength="61" lengthAdjust="spacingAndGlyphs" style="fill:#2a6fd6;text-decoration:underline">NIcardipine</text>

<!-- Plot callouts -->
<rect x="1051" y="527" width="130" height="67" rx="16" class="cl"/>
<text x="1113.600" y="554.700" class="ct">Odds Ratio</text><text x="1113.600" y="574" class="ct">Volcano Plot</text>
<rect x="1052" y="1303" width="147" height="83" rx="18" class="cl"/>
<text x="1123.800" y="1330" class="ct">Differences in</text><text x="1123.800" y="1349" class="ct">Proportions</text><text x="1123.800" y="1368" class="ct">Volcano Plot</text>

<!-- Top callouts -->
<path d="M27 23H91Q105 23 105 37V64Q105 78 91 78H86L105 117L63 78H27Q13 78 13 64V37Q13 23 27 23Z" class="cl"/>
<text x="56" y="45" class="ct">General</text><text x="56" y="64" class="ct">Buttons</text>
<path d="M358 8H447Q461 8 461 22V48Q461 62 447 62H395L318 106L368 62H358Q344 62 344 48V22Q344 8 358 8Z" class="cl"/>
<text x="400" y="30" class="ct">Drill Down</text><text x="400" y="49" class="ct">Buttons</text>
<path d="M48 297H88L124 267L111 297H117Q129 297 129 309V320Q129 332 117 332H48Q36 332 36 320V309Q36 297 48 297Z" class="cl"/>
<text x="80" y="319" class="ct">Results</text>
</svg>
</body></html>
